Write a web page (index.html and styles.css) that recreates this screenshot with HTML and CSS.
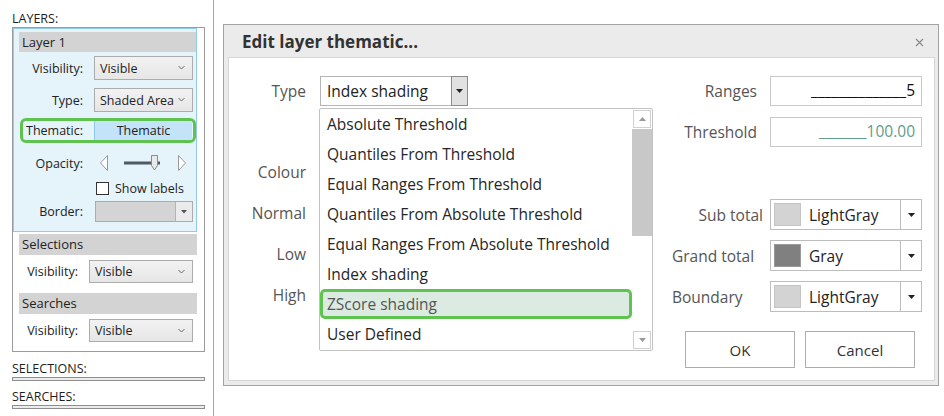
FILE: index.html
```html
<!DOCTYPE html>
<html lang="en">
<head>
<meta charset="UTF-8" />
<title>Edit layer thematic</title>
<link rel="stylesheet" href="styles.css">
</head>
<body>
<div class="app">
  <aside class="side">
    <div class="side-title">LAYERS:</div>
    <div class="layers-box">
      <div class="layer-card">
        <div class="group-head">Layer 1</div>
        <div class="row row-vis">
          <span class="row-label">Visibility:</span>
          <div class="pick"><span>Visible</span><svg class="chev" width="7" height="5" viewBox="0 0 7 5"><polyline points="0.5,1 3.5,4 6.5,1" fill="none" stroke="#666" stroke-width="1"/></svg></div>
        </div>
        <div class="row row-type">
          <span class="row-label">Type:</span>
          <div class="pick"><span class="clip">Shaded Area</span><svg class="chev" width="7" height="5" viewBox="0 0 7 5"><polyline points="0.5,1 3.5,4 6.5,1" fill="none" stroke="#666" stroke-width="1"/></svg></div>
        </div>
        <div class="thematic">
          <span class="thematic-label">Thematic:</span>
          <span class="thematic-cell">Thematic</span>
        </div>
        <div class="row row-opacity">
          <span class="row-label">Opacity:</span>
          <svg width="92" height="18" viewBox="0 0 92 18">
            <polygon points="13.5,1.5 13.5,16.5 6.5,9" fill="#fff" stroke="#999" stroke-width="1"/>
            <rect x="30" y="7.5" width="36" height="3" fill="#4f5a62"/>
            <path d="M57.5 1.5 h6 v10 l-3 4.5 l-3 -4.5 z" fill="#e9e9e9" stroke="#8a8a8a" stroke-width="1"/>
            <polygon points="84.5,1.5 84.5,16.5 91.5,9" fill="#fff" stroke="#999" stroke-width="1"/>
          </svg>
        </div>
        <div class="row row-check">
          <span class="check"></span>
          <span>Show labels</span>
        </div>
        <div class="row row-border">
          <span class="row-label">Border:</span>
          <div class="pick pick-flat"><span class="drop-btn"><svg width="6" height="4" viewBox="0 0 6 4"><polygon points="0,0 6,0 3,3.5" fill="#555"/></svg></span></div>
        </div>
      </div>
      <div class="group-head outer">Selections</div>
      <div class="row row-sub">
        <span class="row-label">Visibility:</span>
        <div class="pick"><span>Visible</span><svg class="chev" width="7" height="5" viewBox="0 0 7 5"><polyline points="0.5,1 3.5,4 6.5,1" fill="none" stroke="#666" stroke-width="1"/></svg></div>
      </div>
      <div class="group-head outer searches">Searches</div>
      <div class="row row-sub">
        <span class="row-label">Visibility:</span>
        <div class="pick"><span>Visible</span><svg class="chev" width="7" height="5" viewBox="0 0 7 5"><polyline points="0.5,1 3.5,4 6.5,1" fill="none" stroke="#666" stroke-width="1"/></svg></div>
      </div>
    </div>
    <div class="side-title small-gap">SELECTIONS:</div>
    <div class="side-bar"></div>
    <div class="side-title small-gap2">SEARCHES:</div>
    <div class="side-bar"></div>
  </aside>

  <section class="dialog">
    <div class="dialog-title">
      <span>Edit layer thematic...</span>
      <svg class="close" width="9" height="9" viewBox="0 0 9 9"><path d="M1 1 L8 8 M8 1 L1 8" stroke="#888" stroke-width="1.1"/></svg>
    </div>
    <div class="dialog-body">
      <div class="dlg-left">
        <div class="field-row">
          <span class="dlg-label">Type</span>
          <div class="type-field">
            <span class="type-value">Index shading</span>
            <span class="type-btn"><svg width="7" height="4" viewBox="0 0 7 4"><polygon points="0,0 7,0 3.5,4" fill="#222"/></svg></span>
            <div class="type-list">
              <div class="list-items">
                <div class="list-item">Absolute Threshold</div>
                <div class="list-item">Quantiles From Threshold</div>
                <div class="list-item">Equal Ranges From Threshold</div>
                <div class="list-item">Quantiles From Absolute Threshold</div>
                <div class="list-item">Equal Ranges From Absolute Threshold</div>
                <div class="list-item">Index shading</div>
                <div class="list-item picked">ZScore shading</div>
                <div class="list-item">User Defined</div>
              </div>
              <div class="scroll">
                <span class="scroll-btn"><svg width="7" height="4" viewBox="0 0 7 4"><polygon points="0,4 7,4 3.5,0" fill="#999"/></svg></span>
                <span class="scroll-thumb"></span>
                <span class="scroll-space"></span>
                <span class="scroll-btn"><svg width="7" height="4" viewBox="0 0 7 4"><polygon points="0,0 7,0 3.5,4" fill="#999"/></svg></span>
              </div>
            </div>
          </div>
        </div>
        <div class="field-row colour-row"><span class="dlg-label">Colour</span></div>
        <div class="field-row"><span class="dlg-label">Normal</span></div>
        <div class="field-row"><span class="dlg-label">Low</span></div>
        <div class="field-row"><span class="dlg-label">High</span></div>
      </div>

      <div class="dlg-right">
        <div class="rfield">
          <span class="rlabel inset">Ranges</span>
          <div class="masked">______________5</div>
        </div>
        <div class="rfield gap-s">
          <span class="rlabel inset">Threshold</span>
          <div class="masked green">_______100.00</div>
        </div>
        <div class="rfield colour gap-l">
          <span class="rlabel">Sub total</span>
          <div class="colour-pick"><span class="swatch light"></span><span class="cname">LightGray</span><span class="cbtn"><svg width="7" height="4" viewBox="0 0 7 4"><polygon points="0,0 7,0 3.5,4" fill="#222"/></svg></span></div>
        </div>
        <div class="rfield colour gap-s">
          <span class="rlabel left">Grand total</span>
          <div class="colour-pick"><span class="swatch dark"></span><span class="cname">Gray</span><span class="cbtn"><svg width="7" height="4" viewBox="0 0 7 4"><polygon points="0,0 7,0 3.5,4" fill="#222"/></svg></span></div>
        </div>
        <div class="rfield colour gap-s">
          <span class="rlabel left">Boundary</span>
          <div class="colour-pick"><span class="swatch light"></span><span class="cname">LightGray</span><span class="cbtn"><svg width="7" height="4" viewBox="0 0 7 4"><polygon points="0,0 7,0 3.5,4" fill="#222"/></svg></span></div>
        </div>
        <div class="buttons">
          <button class="btn">OK</button>
          <button class="btn">Cancel</button>
        </div>
      </div>
    </div>
  </section>
</div>
</body>
</html>
```

FILE: styles.css
```css
body {
  margin: 0;
  background: #fff;
  font-family: "Open Sans", "Noto Sans", sans-serif;
  color: #222;
}
.app {
  display: flex;
  align-items: flex-start;
}

/* Left layers panel */
.side {
  width: 214px;
  height: 416px;
  box-sizing: border-box;
  border-right: 1px solid #a6a6a6;
  padding-left: 12px;
  font-size: 12.5px;
}
.side-title {
  padding-top: 10px;
  line-height: 17px;
  height: 17px;
  color: #1e1e1e;
}
.side-title.small-gap { padding-top: 8px; }
.side-title.small-gap2 { padding-top: 7px; }
.side-bar {
  width: 193px;
  height: 4px;
  box-sizing: border-box;
  border: 1px solid #8e8e8e;
  background: #ececec;
}
.layers-box {
  width: 193px;
  box-sizing: border-box;
  border: 1px solid #9c9c9c;
  padding: 0 7px 9px 0;
}
.layer-card {
  background: #e5f3fb;
  border: 1px solid #92cbe9;
  padding: 3px 0 9px 5px;
}
.group-head {
  height: 20px;
  line-height: 20px;
  background: #d3d3d3;
  padding-left: 3px;
  font-size: 13px;
  color: #222;
}
.group-head.outer {
  margin: 2px 0 0 6px;
  height: 21px;
  line-height: 21px;
}
.group-head.searches { margin-top: 10px; }

.row {
  display: flex;
  align-items: center;
  font-size: 12.5px;
}
.row-label {
  width: 64px;
  text-align: right;
  margin-right: 11px;
  flex: none;
}
.row-vis { margin-top: 4px; height: 24px; }
.row-type { margin-top: 8px; height: 24px; }
.row-opacity { margin-top: 9px; height: 22px; }
.row-check { margin-top: 4px; height: 20px; padding-left: 77px; }
.row-border { margin-top: 3px; height: 21px; }
.row-border .row-label { margin-right: 12px; }
.row-sub { margin-top: 5px; height: 23px; padding-left: 6px; }
.row-sub .row-label { width: 59px; }

.pick {
  width: 99px;
  height: 100%;
  box-sizing: border-box;
  border: 1px solid #acacac;
  background: linear-gradient(#f2f2f2, #e6e6e6);
  display: flex;
  align-items: center;
  padding-left: 5px;
  position: relative;
  overflow: hidden;
}
.row-sub .pick { width: 104px; }
.pick .chev {
  position: absolute;
  right: 7px;
  top: 50%;
  margin-top: -3px;
}
.pick .clip {
  white-space: nowrap;
  width: 74px;
  overflow: hidden;
}
.pick-flat {
  width: 98px;
  background: #d4d4d4;
  padding-left: 0;
  justify-content: flex-end;
}
.drop-btn {
  width: 16px;
  height: 100%;
  background: #ebebeb;
  border-left: 1px solid #b4b4b4;
  display: flex;
  align-items: center;
  justify-content: center;
}

.thematic {
  margin: 6px 0 0 1px;
  width: 176px;
  height: 25px;
  box-sizing: border-box;
  border: 3px solid #5ec44f;
  border-radius: 6px;
  display: flex;
  font-size: 12.5px;
  overflow: hidden;
}
.thematic-label {
  width: 68px;
  padding-left: 3px;
  line-height: 19px;
  border-right: 1px solid #8cc9ea;
}
.thematic-cell {
  flex: 1;
  background: #c3e3f8;
  text-align: center;
  line-height: 19px;
  margin-right: 1px;
}
.check {
  width: 11px;
  height: 11px;
  border: 1px solid #333;
  background: #fff;
  margin-right: 6px;
}

/* Dialog */
.dialog {
  margin: 24px 0 0 9px;
  width: 716px;
  height: 362px;
  box-sizing: border-box;
  border: 1px solid #a2a2a2;
  background: #ebebeb;
  padding: 0 3px 4px 4px;
  display: flex;
  flex-direction: column;
}
.dialog-title {
  height: 32px;
  flex: none;
  display: flex;
  align-items: center;
  justify-content: space-between;
  padding: 0 11px 0 14px;
  font-size: 17px;
  font-weight: 700;
  color: #333;
}
.dialog-title .close { margin-top: 3px; }
.dialog-body {
  flex: 1;
  background: #fff;
  border: 1px solid #d6d6d6;
  display: flex;
  font-size: 15.5px;
}
.dlg-left {
  padding-top: 18px;
  width: 239px;
}
.field-row {
  display: flex;
  align-items: center;
  height: 30px;
  margin-top: 11px;
}
.field-row:first-child { margin-top: 0; }
.field-row.colour-row { margin-top: 51px; }
.dlg-label {
  width: 77px;
  text-align: right;
  margin-right: 14px;
  color: #555;
}
.type-field {
  width: 148px;
  height: 30px;
  box-sizing: border-box;
  border: 1px solid #b5b5b5;
  display: flex;
  align-items: center;
  position: relative;
}
.type-value {
  flex: 1;
  padding-left: 6px;
  white-space: nowrap;
}
.type-btn {
  width: 17px;
  height: 30px;
  margin: -1px -1px -1px 0;
  box-sizing: border-box;
  border: 1px solid #8c8c8c;
  background: #e1e1e1;
  display: flex;
  align-items: center;
  justify-content: center;
}

/* Open dropdown list, floats over the form */
.type-list {
  position: absolute;
  left: -2px;
  top: calc(100% + 3px);
  width: 334px;
  height: 243px;
  box-sizing: border-box;
  border: 1px solid #c2c2c2;
  border-radius: 2px;
  background: #fff;
  display: flex;
  z-index: 5;
}
.list-items { flex: 1; }
.list-item {
  height: 30px;
  line-height: 31px;
  padding-left: 7px;
  color: #262626;
  white-space: nowrap;
}
.list-item.picked {
  box-sizing: border-box;
  border: 3px solid #5ec44f;
  border-radius: 5px;
  background: #dcebe2;
  line-height: 25px;
  padding-left: 4px;
  color: #555;
}
.scroll {
  width: 20px;
  display: flex;
  flex-direction: column;
  align-items: center;
}
.scroll-btn {
  width: 18px;
  height: 18px;
  margin: 1px 0;
  box-sizing: border-box;
  border: 1px solid #d0d0d0;
  display: flex;
  align-items: center;
  justify-content: center;
}
.scroll-thumb {
  width: 20px;
  height: 107px;
  background: #c8c8c8;
}
.scroll-space { flex: 1; }

.dlg-right {
  margin-left: auto;
  padding: 18px 12px 0 0;
  width: 250px;
}
.rfield {
  display: grid;
  grid-template-columns: 91px 152px;
  column-gap: 7px;
  align-items: center;
  height: 30px;
}
.rfield.colour { height: 31px; }
.rfield.gap-s { margin-top: 11px; }
.rfield.gap-l { margin-top: 52px; }
.rfield.colour.gap-s { margin-top: 10px; }
.rlabel {
  text-align: right;
  color: #555;
  white-space: nowrap;
}
.rlabel.inset { padding-right: 6px; }
.rlabel.left { text-align: left; }
.masked {
  height: 30px;
  box-sizing: border-box;
  border: 1px solid #c9c9c9;
  text-align: right;
  padding-right: 6px;
  line-height: 27px;
  white-space: nowrap;
  overflow: hidden;
  color: #111;
}
.masked.green { color: #5e9d8a; }
.colour-pick {
  height: 31px;
  box-sizing: border-box;
  border: 1px solid #bdbdbd;
  display: flex;
  align-items: center;
}
.swatch {
  width: 27px;
  height: 23px;
  box-sizing: border-box;
  margin-left: 3px;
  border: 1px solid #c4c4c4;
}
.swatch.light { background: #d3d3d3; }
.swatch.dark { background: #808080; border-color: #9a9a9a; }
.cname {
  flex: 1;
  padding-left: 8px;
  color: #222;
}
.cbtn {
  width: 20px;
  height: 100%;
  border-left: 1px solid #bdbdbd;
  display: flex;
  align-items: center;
  justify-content: center;
}
.buttons {
  display: flex;
  gap: 10px;
  margin: 19px 0 0 13px;
}
.btn {
  width: 110px;
  height: 37px;
  border: 1px solid #adadad;
  background: #fff;
  font-family: inherit;
  font-size: 15px;
  color: #333;
}
```
